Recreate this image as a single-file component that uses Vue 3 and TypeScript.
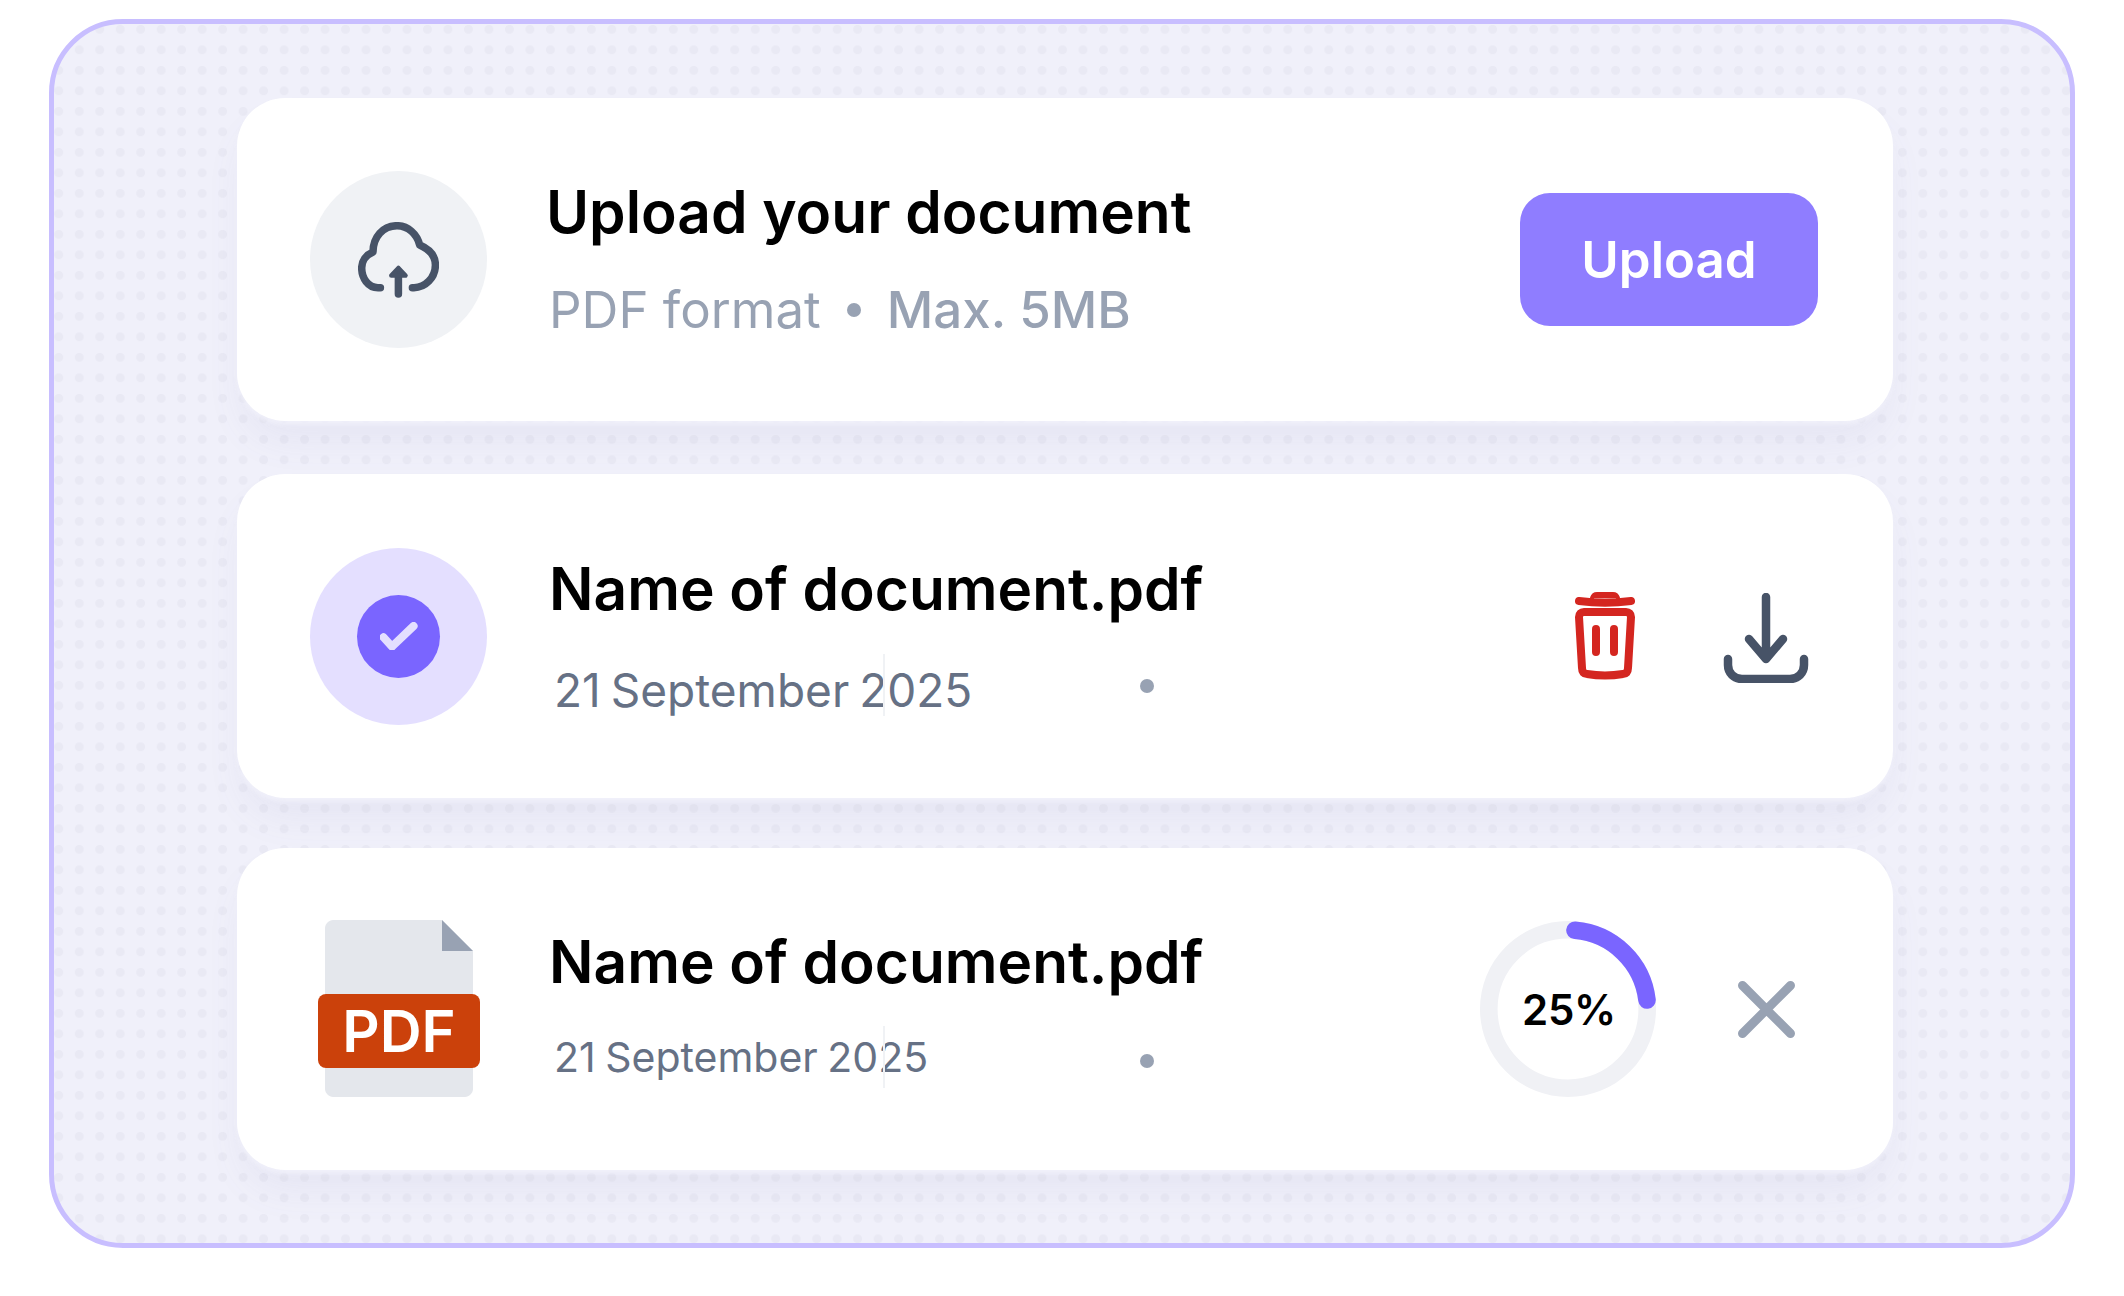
<script setup lang="ts">
const ringLabel: string = '25%'
</script>

<template>
  <main class="page">
    <section class="frame">
      <article class="card first">
        <div class="avatar grey">
          <svg class="cloud" viewBox="0 0 81 76" fill="none" stroke="#475367" stroke-width="7.500" stroke-linecap="round" stroke-linejoin="round">
            <path d="M22.400 65.700H20C10 65.700 3.700 56 3.700 46C3.700 39 8 33 15 30C15 15 25 3.700 39 3.700C50 3.700 59 12 61.700 23C71 27 77.400 34 77.400 43C77.400 56 67 65.700 56 65.700H54.400" />
            <path d="M40.400 72V50" />
            <path d="M40.400 46L47.500 53.500H33.300Z" fill="#475367" stroke-width="4.500" />
          </svg>
        </div>
        <div class="text">
          <h2 class="title">Upload your document</h2>
          <p class="meta">
            <span>PDF format</span><i class="sep"></i><span class="strong">Max. 5MB</span>
          </p>
        </div>
        <button class="upload">Upload</button>
      </article>

      <article class="card second">
        <div class="avatar violet">
          <div class="tick">
            <svg viewBox="0 0 38 28" fill="none" stroke="#e4dfff" stroke-width="8" stroke-linecap="round" stroke-linejoin="round">
              <path d="M3.600 15.300L12 24.700L33.600 4" />
            </svg>
          </div>
        </div>
        <div class="text">
          <h2 class="title">Name of document.pdf</h2>
          <p class="date large">21 September 2025<i class="rule"></i><i class="dot"></i></p>
        </div>
        <div class="actions">
          <svg class="trash" viewBox="0 0 60 88" fill="none" stroke="#d42620" stroke-width="8" stroke-linecap="round" stroke-linejoin="round">
            <path d="M4 9C20 11 40 11 56 9" />
            <path d="M17 6C18 3 19 2 22 2H38C41 2 42 3 43 6" fill="#d42620" stroke-width="4" />
            <path d="M9 20H51C54 20 56 22 56 25L53 76C53 80 51 82 48 82C36 84 24 84 12 82C9 82 7 80 7 76L4 25C4 22 6 20 9 20Z" />
            <path d="M21 37V60M39 37V60" />
          </svg>
          <svg class="download" viewBox="0 0 86 90" fill="none" stroke="#475367" stroke-width="8.500" stroke-linecap="round" stroke-linejoin="round">
            <path d="M43 4V66M26 46L43 66L60 46" />
            <path d="M5 66V72C5 80 11 86 19 86H67C75 86 81 80 81 72V66" />
          </svg>
        </div>
      </article>

      <article class="card third">
        <div class="fileicon">
          <svg class="page-svg" viewBox="0 0 162 177">
            <path d="M7 8C7 4 11 0 15 0H124L155 31V169C155 173 151 177 147 177H15C11 177 7 173 7 169Z" fill="#e4e7ec" />
            <path d="M124 0L155 31H124Z" fill="#98a2b3" />
          </svg>
          <span class="badge">PDF</span>
        </div>
        <div class="text">
          <h2 class="title">Name of document.pdf</h2>
          <p class="date small">21 September 2025<i class="rule"></i><i class="dot"></i></p>
        </div>
        <div class="actions progress">
          <div class="ring">
            <svg viewBox="0 0 176 176" fill="none" stroke-width="17.600">
              <circle cx="88" cy="88" r="79.200" stroke="#f0f1f5" />
              <path d="M95 9.300A79.200 79.200 0 0 1 167 79" stroke="#7a65ff" stroke-linecap="round" />
            </svg>
            <span>{{ ringLabel }}</span>
          </div>
          <svg class="close" viewBox="0 0 57 57" fill="none" stroke="#98a2b3" stroke-width="9" stroke-linecap="round">
            <path d="M4.500 4.500L52.500 52.500M52.500 4.500L4.500 52.500" />
          </svg>
        </div>
      </article>
    </section>
  </main>
</template>

<style>
html, body { margin: 0; background: #fff; }
</style>

<style scoped>
.page {
  width: 2124px;
  height: 1296px;
  padding: 19px 0 0 49px;
  box-sizing: border-box;
  font-family: Inter, "Liberation Sans", sans-serif;
}
.frame {
  width: 2026px;
  height: 1229px;
  box-sizing: border-box;
  border: 5px solid #c8beff;
  border-radius: 74px;
  background-color: #f0f0fa;
  background-image: radial-gradient(circle, #e9e9f4 4.100px, transparent 4.600px);
  background-size: 20.490px 20.500px;
  background-position: -5.500px -4.950px;
  padding: 74px 0 0 183px;
  display: flex;
  flex-direction: column;
  align-items: flex-start;
}
.card {
  width: 1656px;
  box-sizing: border-box;
  background: #fff;
  border-radius: 48px;
  box-shadow:
    0 4px 4px rgba(241, 241, 250, 0.85),
    0 24px 40px -8px rgba(115, 115, 170, 0.09);
  display: flex;
  align-items: center;
  padding-left: 73px;
  position: relative;
}
.first { height: 323px; margin-bottom: 53px; }
.second { height: 324px; margin-bottom: 50px; }
.third { height: 322px; }
.avatar {
  width: 177px;
  height: 177px;
  border-radius: 50%;
  flex: none;
  display: flex;
  align-items: center;
  justify-content: center;
}
.grey { background: #f0f2f5; }
.violet { background: #e4dfff; }
.cloud { width: 81px; height: 76px; margin-top: 1px; }
.tick {
  width: 83px;
  height: 83px;
  border-radius: 50%;
  background: #7a65ff;
  display: flex;
  align-items: center;
  justify-content: center;
}
.tick svg { width: 38px; height: 28px; }
.text { margin-left: 62px; flex: none; width: 700px; }
.first .text { margin-bottom: 3px; }
.second .text { margin-top: 4px; }
.third .text { margin-bottom: 4px; }
.first .title { margin-left: -3px; }
.title {
  margin: 0;
  font-size: 58.600px;
  line-height: 70px;
  font-weight: 600;
  color: #000;
}
.meta {
  margin: 33px 0 0;
  display: flex;
  align-items: center;
  font-size: 51px;
  line-height: 60px;
  color: #98a2b3;
}
.strong { font-weight: 500; }
.sep {
  width: 14px;
  height: 14px;
  border-radius: 50%;
  background: #98a2b3;
  margin: 0 26px;
}
.date {
  margin: 34px 0 0 5px;
  color: #667185;
  position: relative;
}
.date.large { font-size: 46px; line-height: 64px; word-spacing: -3px; }
.date.small { margin-top: 29px; font-size: 41px; line-height: 62px; word-spacing: -2px; }
.rule {
  position: absolute;
  left: 329px;
  top: -4px;
  width: 2px;
  height: 62px;
  background: #f0f2f5;
}
.small .rule { top: 0; }
.dot {
  position: absolute;
  left: 586px;
  top: 21px;
  width: 14px;
  height: 14px;
  border-radius: 50%;
  background: #98a2b3;
}
.small .dot { top: 28px; }
.upload {
  width: 298px;
  height: 133px;
  margin-left: auto;
  margin-right: 75px;
  border: 0;
  border-radius: 30px;
  background: #8f7dff;
  color: #fff;
  font: 600 51px Inter, sans-serif;
}
.actions {
  margin-left: auto;
  margin-right: 84px;
  display: flex;
  align-items: center;
  gap: 88px;
}
.trash { width: 60px; height: 88px; }
.download { width: 86px; height: 90px; margin-top: 4px; }
.fileicon {
  width: 162px;
  height: 177px;
  margin: 0 7px 2px 8px;
  flex: none;
  position: relative;
}
.page-svg { display: block; width: 162px; height: 177px; }
.badge {
  position: absolute;
  left: 0;
  top: 74px;
  width: 162px;
  height: 74px;
  border-radius: 8px;
  background: #cb410b;
  color: #fff;
  font-size: 58px;
  font-weight: 600;
  line-height: 74px;
  text-align: center;
}
.progress { gap: 82px; margin-right: 98px; }
.ring { width: 176px; height: 176px; position: relative; margin-bottom: 1px; }
.ring svg { display: block; width: 176px; height: 176px; }
.ring span {
  position: absolute;
  inset: 2px 0 0 2px;
  display: flex;
  align-items: center;
  justify-content: center;
  font-size: 42px;
  font-weight: 600;
  letter-spacing: -0.300px;
  color: #000;
}
.close { width: 57px; height: 57px; }
</style>
